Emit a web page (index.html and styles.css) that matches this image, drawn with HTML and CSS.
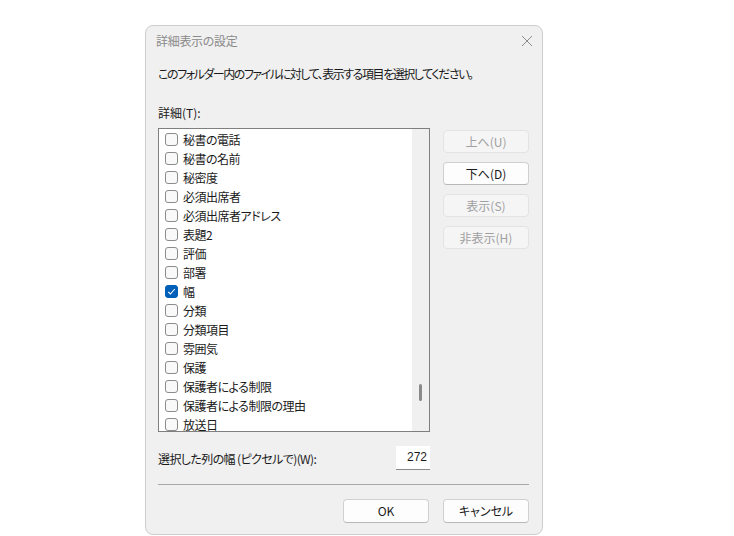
FILE: index.html
```html
<!DOCTYPE html>
<html lang="ja">
<head>
<meta charset="utf-8">
<title>詳細表示の設定</title>
<link rel="stylesheet" href="styles.css">
</head>
<body>
<div class="dialog">
  <div class="titlebar">
    <span class="title">詳細表示の設定</span>
    <span class="close">
      <svg width="12" height="12" viewBox="0 0 12 12"><path d="M1 1L11 11M11 1L1 11" stroke="#8c8c8c" stroke-width="1" fill="none"/></svg>
    </span>
  </div>
  <div class="content">
    <p class="intro">このフォルダー内のファイルに対して、表示する項目を選択してください。</p>
    <p class="label">詳細(T):</p>
    <div class="main">
      <div class="listbox">
        <ul class="items">
          <li><span class="cb"></span>秘書の電話</li>
          <li><span class="cb"></span>秘書の名前</li>
          <li><span class="cb"></span>秘密度</li>
          <li><span class="cb"></span>必須出席者</li>
          <li><span class="cb"></span>必須出席者アドレス</li>
          <li><span class="cb"></span>表題2</li>
          <li><span class="cb"></span>評価</li>
          <li><span class="cb"></span>部署</li>
          <li><span class="cb checked"><svg width="9" height="9" viewBox="0 0 9 9"><path d="M1.2 4.8L3.4 7L7.8 2" stroke="#fff" stroke-width="1.1" fill="none"/></svg></span>幅</li>
          <li><span class="cb"></span>分類</li>
          <li><span class="cb"></span>分類項目</li>
          <li><span class="cb"></span>雰囲気</li>
          <li><span class="cb"></span>保護</li>
          <li><span class="cb"></span>保護者による制限</li>
          <li><span class="cb"></span>保護者による制限の理由</li>
          <li class="partial"><span class="cb"></span>放送日</li>
        </ul>
        <div class="scrollbar"><span class="thumb"></span></div>
      </div>
      <div class="side">
        <button class="btn disabled">上へ(U)</button>
        <button class="btn">下へ(D)</button>
        <button class="btn disabled">表示(S)</button>
        <button class="btn disabled">非表示(H)</button>
      </div>
    </div>
    <div class="widthrow">
      <span class="wlabel">選択した列の幅 (ピクセルで)(W):</span>
      <span class="input">272</span>
    </div>
    <div class="sep"></div>
    <div class="footer">
      <button class="btn">OK</button>
      <button class="btn">キャンセル</button>
    </div>
  </div>
</div>
</body>
</html>
```
FILE: styles.css
```css
html, body {
  margin: 0;
  padding: 0;
  background: #ffffff;
}
body {
  font-family: "Noto Sans CJK JP", "Noto Sans", sans-serif;
  font-size: 12px;
  color: #1a1a1a;
  font-feature-settings: "palt";
}
.dialog {
  margin: 25px 0 0 145px;
  width: 398px;
  height: 510px;
  box-sizing: border-box;
  border: 1px solid #cdcdcd;
  border-radius: 8px;
  background: #f0f0f0;
  overflow: hidden;
}
.titlebar {
  height: 29px;
  display: flex;
  align-items: center;
  justify-content: space-between;
  padding: 0 9px 0 10px;
}
.title {
  color: #8a8a8a;
  font-size: 12px;
  line-height: 16px;
  letter-spacing: -0.3px;
}
.close {
  display: flex;
  width: 12px;
  height: 12px;
}
.content {
  padding: 0 13px 0 12px;
}
.intro {
  margin: 11px 0 0;
  line-height: 16px;
  height: 16px;
  letter-spacing: -1.45px;
  white-space: nowrap;
}
.label {
  margin: 23px 0 0;
  line-height: 16px;
  height: 16px;
}
.main {
  margin-top: 7px;
  display: flex;
  gap: 13px;
  align-items: flex-start;
}
.listbox {
  width: 273px;
  height: 304px;
  box-sizing: border-box;
  border: 1px solid #7f7f7f;
  background: #ffffff;
  display: flex;
  overflow: hidden;
}
.items {
  list-style: none;
  margin: 0;
  padding: 1px 0 0 6px;
  flex: 1;
  overflow: hidden;
}
.items li {
  height: 19px;
  display: flex;
  align-items: center;
  gap: 5px;
  white-space: nowrap;
  line-height: 19px;
  letter-spacing: -0.5px;
}
.items li.partial {
  height: 17px;
  align-items: flex-start;
  padding-top: 3px;
  line-height: 14px;
  box-sizing: border-box;
}
.cb {
  width: 13px;
  height: 13px;
  box-sizing: border-box;
  border: 1px solid #8b8b8b;
  border-radius: 3px;
  background: #f9f9f9;
  flex: none;
  display: flex;
  align-items: center;
  justify-content: center;
}
.cb.checked {
  background: #005fb8;
  border-color: #005fb8;
}
.scrollbar {
  width: 17px;
  background: #f0f0f0;
  flex: none;
  position: relative;
}
.thumb {
  position: absolute;
  top: 255px;
  left: 7px;
  width: 3px;
  height: 17px;
  border-radius: 2px;
  background: #8a8a8a;
}
.side {
  margin-top: 2px;
  display: flex;
  flex-direction: column;
  gap: 9px;
}
.btn {
  width: 86px;
  height: 23px;
  box-sizing: border-box;
  font-family: inherit;
  font-size: 12px;
  font-feature-settings: "palt";
  color: #1a1a1a;
  background: #fdfdfd;
  border: 1px solid #d0d0d0;
  border-bottom-color: #b8b8b8;
  border-radius: 4px;
  padding: 0;
  line-height: 20px;
}
.btn.disabled {
  background: #f5f5f5;
  border-color: #e3e3e3;
  color: #a0a0a0;
}
.widthrow {
  margin-top: 14px;
  display: flex;
  align-items: center;
  justify-content: space-between;
  width: 272px;
  height: 24px;
}
.wlabel {
  letter-spacing: -0.6px;
}
.input {
  width: 34px;
  height: 24px;
  box-sizing: border-box;
  background: #ffffff;
  border-bottom: 1px solid #8a8a8a;
  text-align: right;
  padding-right: 3px;
  line-height: 23px;
  font-family: "Liberation Sans", sans-serif;
  font-size: 12px;
}
.sep {
  margin-top: 14px;
  height: 1px;
  width: 371px;
  background: #a8a8a8;
}
.footer {
  margin-top: 14px;
  display: flex;
  justify-content: flex-end;
  gap: 14px;
  width: 371px;
}
.footer .btn {
  height: 24px;
}
```
